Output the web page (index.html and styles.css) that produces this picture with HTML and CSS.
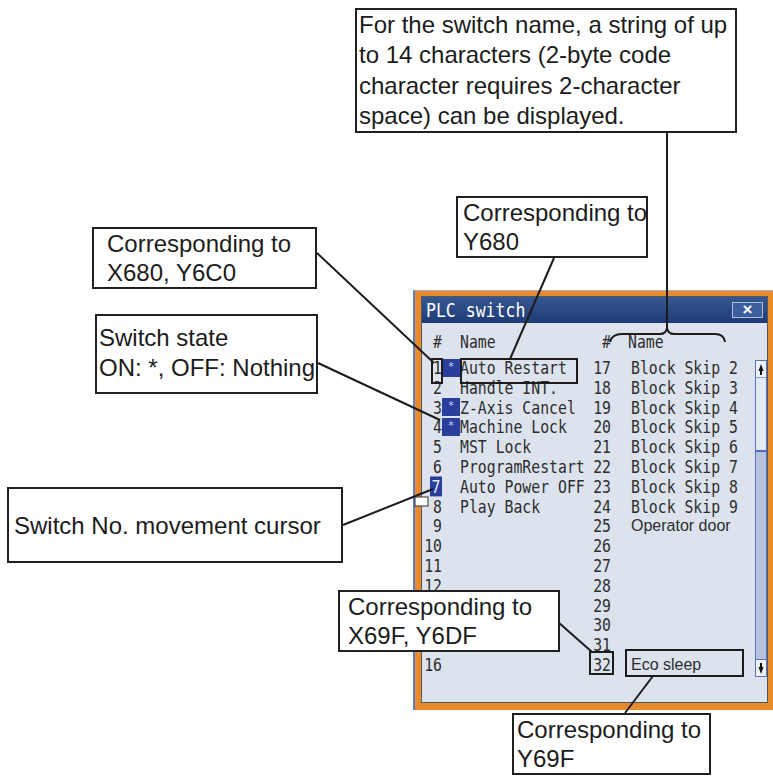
FILE: index.html
```html
<!DOCTYPE html>
<html>
<head>
    <meta charset="UTF-8">
    <title>PLC switch</title>
    <link rel="stylesheet" href="styles.css">
</head>
<body>
<div class="page">

    <div class="window">
        <div class="dialog">
            <div class="titlebar">
                <span class="title">PLC switch</span>
                <span class="close">×</span>
            </div>
            <div class="body">
                <div class="row head">
                    <span class="no">#</span><span class="mark"></span><span class="name">Name</span>
                    <span class="no2">#</span><span class="name2 h-name2">Name</span>
                </div>
                <div class="main">
                    <div class="rows">
                        <div class="row"><span class="no">1</span><span class="mark on">*</span><span class="name">Auto Restart</span><span class="no2">17</span><span class="name2">Block Skip 2</span></div>
                        <div class="row"><span class="no">2</span><span class="mark"></span><span class="name">Handle INT.</span><span class="no2">18</span><span class="name2">Block Skip 3</span></div>
                        <div class="row"><span class="no">3</span><span class="mark on">*</span><span class="name">Z-Axis Cancel</span><span class="no2">19</span><span class="name2">Block Skip 4</span></div>
                        <div class="row"><span class="no">4</span><span class="mark on">*</span><span class="name">Machine Lock</span><span class="no2">20</span><span class="name2">Block Skip 5</span></div>
                        <div class="row"><span class="no">5</span><span class="mark"></span><span class="name">MST Lock</span><span class="no2">21</span><span class="name2">Block Skip 6</span></div>
                        <div class="row"><span class="no">6</span><span class="mark"></span><span class="name">ProgramRestart</span><span class="no2">22</span><span class="name2">Block Skip 7</span></div>
                        <div class="row"><span class="no"><span class="cur">7</span></span><span class="mark"></span><span class="name">Auto Power OFF</span><span class="no2">23</span><span class="name2">Block Skip 8</span></div>
                        <div class="row"><span class="no">8</span><span class="mark"></span><span class="name">Play Back</span><span class="no2">24</span><span class="name2">Block Skip 9</span></div>
                        <div class="row"><span class="no">9</span><span class="mark"></span><span class="name"></span><span class="no2">25</span><span class="name2 prop">Operator door</span></div>
                        <div class="row"><span class="no">10</span><span class="mark"></span><span class="name"></span><span class="no2">26</span><span class="name2"></span></div>
                        <div class="row"><span class="no">11</span><span class="mark"></span><span class="name"></span><span class="no2">27</span><span class="name2"></span></div>
                        <div class="row"><span class="no">12</span><span class="mark"></span><span class="name"></span><span class="no2">28</span><span class="name2"></span></div>
                        <div class="row"><span class="no"></span><span class="mark"></span><span class="name"></span><span class="no2">29</span><span class="name2"></span></div>
                        <div class="row"><span class="no"></span><span class="mark"></span><span class="name"></span><span class="no2">30</span><span class="name2"></span></div>
                        <div class="row"><span class="no"></span><span class="mark"></span><span class="name"></span><span class="no2">31</span><span class="name2"></span></div>
                        <div class="row"><span class="no">16</span><span class="mark"></span><span class="name"></span><span class="no2">32</span><span class="name2 prop">Eco sleep</span></div>
                    </div>
                    <div class="scroll">
                        <div class="sb-btn sb-up">
                            <svg width="6" height="11" viewBox="0 0 6 11"><polygon points="3,0 5.5,7 4,7 4,11 2,11 2,7 0.5,7" fill="#111"/></svg>
                        </div>
                        <div class="sb-thumb"></div>
                        <div class="sb-track"></div>
                        <div class="sb-btn sb-down">
                            <svg width="6" height="11" viewBox="0 0 6 11"><polygon points="3,11 5.5,4 4,4 4,0 2,0 2,4 0.5,4" fill="#111"/></svg>
                        </div>
                    </div>
                </div>
            </div>
        </div>
    </div>

    <!-- leader lines and marker boxes -->
    <svg class="leaders" width="773" height="776" viewBox="0 0 773 776">
        <g stroke="#1c1c1c" stroke-width="2" fill="none">
            <line x1="317" y1="253" x2="434" y2="363"/>
            <line x1="318" y1="363" x2="440" y2="420"/>
            <line x1="343" y1="525" x2="433" y2="489"/>
            <line x1="554" y1="258" x2="510" y2="359"/>
            <line x1="667" y1="133" x2="667" y2="328"/>
            <path d="M610,342 Q612,334 622,334 L660,334 Q666,334 667,328 Q668,334 674,334 L715,334 Q724,334 725,342"/>
            <line x1="558" y1="622" x2="592" y2="652"/>
            <line x1="625" y1="713" x2="653" y2="676"/>
            <rect x="432" y="359" width="10" height="24"/>
            <rect x="461" y="359" width="116" height="24"/>
            <rect x="590" y="652" width="23" height="22"/>
            <rect x="626" y="650" width="117" height="26"/>
        </g>
        <rect x="415" y="497" width="13" height="9" fill="#fff" stroke="#333" stroke-width="1"/>
    </svg>

    <div class="callout c-name">For the switch name, a string of up<br>to 14 characters (2-byte code<br>character requires 2-character<br>space) can be displayed.</div>
    <div class="callout c-y680">Corresponding to<br>Y680</div>
    <div class="callout c-x680">Corresponding to<br>X680, Y6C0</div>
    <div class="callout c-state">Switch state<br>ON: *, OFF: Nothing</div>
    <div class="callout c-cursor">Switch No. movement cursor</div>
    <div class="callout c-x69f">Corresponding to<br>X69F, Y6DF</div>
    <div class="callout c-y69f">Corresponding to<br>Y69F</div>

</div>
</body>
</html>
```

FILE: styles.css
```css
body {
  margin: 0;
  background: #ffffff;
}

.page {
  position: relative;
  width: 773px;
  height: 776px;
  overflow: hidden;
  font-family: "Liberation Sans", Arial, sans-serif;
}

/* PLC switch window */
.window {
  position: absolute;
  left: 413px;
  top: 290px;
  width: 360px;
  height: 420px;
  box-sizing: border-box;
  display: flex;
  background: #e98a2b;
  border-left: 2px solid #5f7cc4;
  border-top: 1px solid #9fb2da;
  padding: 5px 5px 7px 6px;
}

.dialog {
  flex: 1;
  display: flex;
  flex-direction: column;
  border: 1px solid #505868;
  background: #dce3ed;
}

.titlebar {
  height: 26px;
  display: flex;
  align-items: center;
  justify-content: space-between;
  padding: 0 4px;
  background: linear-gradient(#36578f, #1f3b77);
}

.title {
  color: #ffffff;
  font: 16.5px "DejaVu Sans Mono", monospace;
  transform: scaleY(1.15);
}

.close {
  width: 31px;
  height: 16px;
  box-sizing: border-box;
  display: flex;
  align-items: center;
  justify-content: center;
  border: 1px solid #a9bde2;
  background: #3c5e9c;
  color: #ffffff;
  font-size: 17px;
  font-weight: bold;
}

.body {
  flex: 1;
  padding: 9px 0 0 2px;
  font: 14.8px "DejaVu Sans Mono", monospace;
  color: #2d2d2d;
}

.row {
  display: flex;
  align-items: center;
  height: 19.8px;
  line-height: 19.8px;
  white-space: nowrap;
}

/* the screen font is a tall, narrow one */
.no, .name, .no2, .name2 {
  transform: scaleY(1.17);
}

.head {
  height: 20px;
  margin-bottom: 6px;
}

.no {
  width: 19px;
  padding-right: 1px;
  box-sizing: border-box;
  text-align: right;
}

.cur {
  display: inline-block;
  height: 17px;
  line-height: 17px;
  padding: 0 1.5px;
  background: #2a3e9c;
  color: #e6eaf8;
}

.mark {
  width: 17px;
  flex: none;
}

.mark.on {
  width: 18px;
  height: 18px;
  margin-left: -1px;
  background: #2a3e9c;
  color: #c9d0f0;
  font-size: 11px;
  line-height: 15px;
  text-align: center;
}

.name {
  width: 130px;
}

.no2 {
  width: 21px;
  text-align: right;
}

.name2 {
  margin-left: 20px;
}

.h-name2 {
  margin-left: 17px;
}

.prop {
  font: 16px "Liberation Sans", Arial, sans-serif;
  transform: none;
}

.main {
  display: flex;
}

.rows {
  flex: 1;
}

.scroll {
  width: 12px;
  height: 317px;
  margin-top: 2px;
  box-sizing: border-box;
  display: flex;
  flex-direction: column;
  border: 1px solid #5b72c0;
}

.sb-btn {
  height: 16px;
  display: flex;
  align-items: center;
  justify-content: center;
  background: #eef1f7;
}

.sb-up {
  border-bottom: 1px solid #8e9cc8;
}

.sb-thumb {
  height: 72px;
  background: #e3e9f3;
  border-bottom: 2px solid #4d6ac2;
}

.sb-track {
  flex: 1;
  background: #b7c1dd;
}

.sb-down {
  border-top: 1px solid #5b72c0;
}

/* annotations */
.leaders {
  position: absolute;
  left: 0;
  top: 0;
  pointer-events: none;
}

.callout {
  position: absolute;
  box-sizing: border-box;
  border: 2px solid #202020;
  background: #ffffff;
  color: #1c1c1c;
  font-size: 24px;
  line-height: 29px;
  white-space: nowrap;
}

.c-name {
  left: 355px;
  top: 8px;
  width: 382px;
  height: 125px;
  padding-left: 2px;
  line-height: 30.25px;
}

.c-y680 {
  left: 456px;
  top: 196px;
  width: 192px;
  height: 62px;
  padding-left: 5px;
}

.c-x680 {
  left: 92px;
  top: 227px;
  width: 225px;
  height: 62px;
  padding-left: 13px;
}

.c-state {
  left: 95px;
  top: 314px;
  width: 223px;
  height: 80px;
  padding: 7px 0 0 2px;
  line-height: 30px;
}

.c-cursor {
  left: 7px;
  top: 487px;
  width: 336px;
  height: 76px;
  padding-left: 5px;
  display: flex;
  align-items: center;
}

.c-x69f {
  left: 338px;
  top: 590px;
  width: 222px;
  height: 62px;
  padding-left: 8px;
}

.c-y69f {
  left: 512px;
  top: 713px;
  width: 199px;
  height: 62px;
  padding-left: 3px;
}
```
